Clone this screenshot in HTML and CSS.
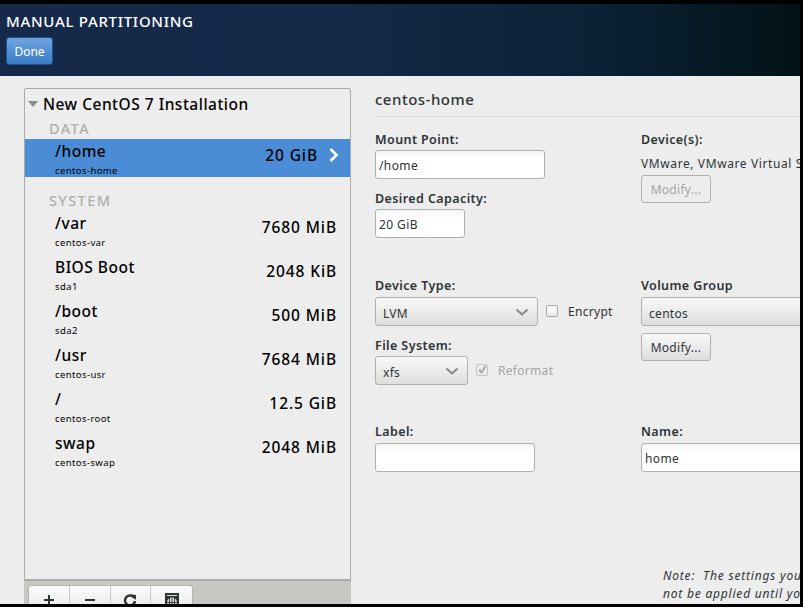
FILE: index.html
```html
<!DOCTYPE html>
<html lang="en">
<head>
    <meta charset="UTF-8">
    <title>Manual Partitioning</title>
    <link rel="stylesheet" href="styles.css">
</head>
<body>
    <div class="window">
        <header class="top-bar">
            <h1>MANUAL PARTITIONING</h1>
            <button class="done-btn">Done</button>
        </header>
        <main class="content">
            <section class="left-side">
                <div class="list-box">
                    <div class="list-title"><span class="arrow-down"></span>New CentOS 7 Installation</div>
                    <div class="group-name">DATA</div>
                    <div class="mount selected">
                        <div><div class="mount-name">/home</div><div class="mount-sub">centos-home</div></div>
                        <div class="mount-size">20 GiB</div>
                        <svg class="chevron" width="12" height="14" viewBox="0 0 12 14"><path d="M1.5 1 L7.5 7 L1.5 13" fill="none" stroke="#fff" stroke-width="2.6"/></svg>
                    </div>
                    <div class="group-name system">SYSTEM</div>
                    <div class="mount">
                        <div><div class="mount-name">/var</div><div class="mount-sub">centos-var</div></div>
                        <div class="mount-size">7680 MiB</div>
                    </div>
                    <div class="mount">
                        <div><div class="mount-name">BIOS Boot</div><div class="mount-sub">sda1</div></div>
                        <div class="mount-size">2048 KiB</div>
                    </div>
                    <div class="mount">
                        <div><div class="mount-name">/boot</div><div class="mount-sub">sda2</div></div>
                        <div class="mount-size">500 MiB</div>
                    </div>
                    <div class="mount">
                        <div><div class="mount-name">/usr</div><div class="mount-sub">centos-usr</div></div>
                        <div class="mount-size">7684 MiB</div>
                    </div>
                    <div class="mount">
                        <div><div class="mount-name">/</div><div class="mount-sub">centos-root</div></div>
                        <div class="mount-size">12.5 GiB</div>
                    </div>
                    <div class="mount">
                        <div><div class="mount-name">swap</div><div class="mount-sub">centos-swap</div></div>
                        <div class="mount-size">2048 MiB</div>
                    </div>
                </div>
                <div class="toolbar">
                    <div class="tool-group">
                        <div class="tool">
                            <svg width="12" height="12" viewBox="0 0 12 12"><path d="M6 1V11M1 6H11" stroke="#2e3436" stroke-width="2"/></svg>
                        </div>
                        <div class="tool">
                            <svg width="12" height="12" viewBox="0 0 12 12"><path d="M1 6H11" stroke="#2e3436" stroke-width="2"/></svg>
                        </div>
                        <div class="tool">
                            <svg width="14" height="14" viewBox="0 0 14 14"><path d="M11.5 4.2A5 5 0 1 0 12 7" fill="none" stroke="#2e3436" stroke-width="2.4"/><path d="M8 0.5L13 1V6Z" fill="#2e3436"/></svg>
                        </div>
                        <div class="tool calendar">
                            <svg width="14" height="16" viewBox="0 0 14 16"><path d="M0 0H14V16H0Z" fill="#2e3436"/><path d="M2 2.5H12" stroke="#ddd"/><circle cx="7" cy="9.5" r="5" fill="#ddd"/><path d="M2 9.5H12M7 4.5V14.5M4.5 5V14M9.5 5V14" stroke="#2e3436" stroke-width=".9"/></svg>
                        </div>
                    </div>
                </div>
            </section>
            <section class="details">
                <h2>centos-home</h2>
                <div class="form-block first">
                    <div class="form-col">
                        <label class="field-label">Mount Point:</label>
                        <input class="text-input wide" value="/home">
                        <label class="field-label second">Desired Capacity:</label>
                        <input class="text-input small" value="20 GiB">
                    </div>
                    <div class="form-col">
                        <label class="field-label">Device(s):</label>
                        <div class="device-text">VMware, VMware Virtual S</div>
                        <button class="modify disabled">Modify...</button>
                    </div>
                </div>
                <div class="form-block middle">
                    <div class="form-col">
                        <label class="field-label">Device Type:</label>
                        <div class="inline-row">
                            <div class="combo type-combo">LVM
                                <svg width="14" height="8" viewBox="0 0 14 8"><path d="M1.5 1.5L7 6.5L12.5 1.5" fill="none" stroke="#888" stroke-width="2"/></svg>
                            </div>
                            <span class="check-box"></span>
                            <span class="check-text">Encrypt</span>
                        </div>
                        <label class="field-label second">File System:</label>
                        <div class="inline-row">
                            <div class="combo fs-combo">xfs
                                <svg width="14" height="8" viewBox="0 0 14 8"><path d="M1.5 1.5L7 6.5L12.5 1.5" fill="none" stroke="#888" stroke-width="2"/></svg>
                            </div>
                            <span class="check-box checked">
                                <svg width="12" height="12" viewBox="0 0 12 12"><path d="M2.5 5.5L5.5 9L10.5 1" fill="none" stroke="#a5a5a5" stroke-width="2.2"/></svg>
                            </span>
                            <span class="check-text faded">Reformat</span>
                        </div>
                    </div>
                    <div class="form-col">
                        <label class="field-label">Volume Group</label>
                        <div class="combo group-combo">centos</div>
                        <button class="modify group-modify">Modify...</button>
                    </div>
                </div>
                <div class="form-block last">
                    <div class="form-col">
                        <label class="field-label">Label:</label>
                        <input class="text-input label-input" value="">
                    </div>
                    <div class="form-col">
                        <label class="field-label">Name:</label>
                        <input class="text-input name-input" value="home">
                    </div>
                </div>
                <p class="note">Note:&nbsp; The settings you<br>not be applied until you</p>
            </section>
        </main>
    </div>
</body>
</html>
```

FILE: styles.css
```css
* {
    box-sizing: border-box;
}
html, body {
    margin: 0;
    height: 607px;
    overflow: hidden;
}
body {
    background: #000;
    padding-top: 4px;
    font-family: "Noto Sans", "Open Sans", sans-serif;
    color: #2e3436;
}
.window {
    width: 800px;
    height: 600px;
    background: #ededed;
    overflow: hidden;
}
.top-bar {
    height: 72px;
    padding: 8px 0 0 6px;
    background: linear-gradient(90deg, #16294a 0%, #142a49 40%, #0a2236 75%, #021316 100%);
}
.top-bar h1 {
    margin: 0;
    font-size: 15px;
    line-height: 18px;
    font-weight: 500;
    letter-spacing: .7px;
    color: #fff;
}
.done-btn {
    display: block;
    margin-top: 7px;
    width: 47px;
    height: 28px;
    padding: 0;
    border: 1px solid #1f4f8c;
    border-radius: 3px;
    background: linear-gradient(#6fa5e0, #3b7cc4);
    color: #fff;
    font-family: inherit;
    font-size: 12px;
}
.content {
    display: flex;
    padding: 12px 0 0 24px;
}
.left-side {
    width: 327px;
    flex: none;
}
.list-box {
    height: 492px;
    border: 1px solid #aaaaa6;
    border-radius: 2px 2px 0 0;
}
.list-title {
    display: flex;
    align-items: center;
    height: 29px;
    padding-left: 3px;
    font-size: 15.5px;
    font-weight: 500;
    letter-spacing: .5px;
    color: #000;
}
.arrow-down {
    width: 0;
    height: 0;
    margin-right: 5px;
    border-left: 5px solid transparent;
    border-right: 5px solid transparent;
    border-top: 6px solid #8c8c88;
}
.group-name {
    height: 21px;
    padding-left: 24px;
    font-size: 14.5px;
    line-height: 20px;
    font-weight: 500;
    letter-spacing: 1.4px;
    color: #aeaeac;
}
.group-name.system {
    margin-top: 13px;
}
.mount {
    display: flex;
    align-items: center;
    height: 38px;
    margin-bottom: 6px;
    padding: 0 13px 0 30px;
    color: #000;
}
.mount.selected {
    margin-bottom: 0;
    padding-right: 9px;
    background: #4a8cd6;
}
.mount > div:first-child {
    flex: 1;
    padding-top: 3px;
}
.mount-name {
    padding-top: 1px;
    font-size: 15.5px;
    line-height: 18px;
    font-weight: 500;
    letter-spacing: .5px;
}
.mount-sub {
    font-size: 9.5px;
    line-height: 16px;
    padding-top: 3px;
    letter-spacing: .4px;
}
.mount-size {
    font-size: 15.5px;
    font-weight: 500;
    letter-spacing: .9px;
    padding-bottom: 6px;
}
.chevron {
    margin: 0 0 7px 11px;
    flex: none;
}
.toolbar {
    height: 30px;
    padding-left: 4px;
    padding-top: 4px;
    background: #c6c8c3;
    border-top: 1px solid #a9aba6;
}
.tool-group {
    display: flex;
    width: 165px;
    height: 40px;
    background: linear-gradient(#fafafa, #e2e2e2);
    border: 1px solid #b5b5b1;
    border-radius: 3px;
}
.tool {
    width: 41px;
    display: flex;
    justify-content: center;
    padding-top: 8px;
    border-right: 1px solid #c8c8c4;
}
.tool:last-child {
    border-right: 0;
}
.tool.calendar {
    padding-top: 7px;
}
.details {
    flex: none;
    width: 600px;
    margin-left: 24px;
}
.details h2 {
    margin: 0;
    height: 29px;
    font-size: 15px;
    line-height: 22px;
    font-weight: 500;
    letter-spacing: .5px;
    border-bottom: 1px solid #dcdcda;
}
.form-block {
    display: grid;
    grid-template-columns: 266px 1fr;
}
.form-block.first {
    height: 160px;
    padding-top: 14px;
}
.form-block.middle {
    height: 146px;
}
.field-label {
    display: block;
    font-size: 12.5px;
    line-height: 17px;
    font-weight: 600;
    letter-spacing: .4px;
    color: #2e3436;
}
.field-label.second {
    margin-top: 11px;
}
.text-input {
    display: block;
    height: 29px;
    margin-top: 2px;
    padding: 2px 4px 0 3px;
    font-family: inherit;
    font-size: 12px;
    letter-spacing: .4px;
    color: #2e3436;
    border: 1px solid #b0b0ac;
    border-radius: 3px;
    background: linear-gradient(#f4f4f4 0, #fff 8px);
    outline: none;
}
.text-input.wide {
    width: 170px;
}
.text-input.small {
    width: 90px;
}
.text-input.label-input {
    width: 160px;
    margin-top: 3px;
}
.text-input.name-input {
    width: 200px;
    margin-top: 3px;
}
.device-text {
    margin-top: 6px;
    font-size: 12px;
    line-height: 20px;
    letter-spacing: .6px;
    white-space: nowrap;
}
.modify {
    display: block;
    width: 70px;
    height: 28px;
    margin-top: 1px;
    padding: 1px 0 0;
    font-family: inherit;
    font-size: 12px;
    letter-spacing: .3px;
    color: #2e3436;
    border: 1px solid #b0b0ac;
    border-radius: 3px;
    background: linear-gradient(#f8f8f8, #dedede);
}
.modify.disabled {
    color: #a5a5a5;
    background: #ededed;
}
.modify.group-modify {
    margin-top: 7px;
}
.inline-row {
    display: flex;
    align-items: center;
    margin-top: 3px;
}
.field-label.second + .inline-row {
    margin-top: 2px;
}
.combo {
    display: flex;
    align-items: center;
    justify-content: space-between;
    height: 29px;
    padding: 3px 8px 0 7px;
    font-size: 12px;
    letter-spacing: .3px;
    border: 1px solid #b0b0ac;
    border-radius: 3px;
    background: linear-gradient(#f8f8f8, #dedede);
}
.combo svg {
    margin-top: -3px;
}
.type-combo {
    width: 163px;
}
.fs-combo {
    width: 93px;
}
.group-combo {
    width: 200px;
    margin-top: 3px;
}
.check-box {
    display: flex;
    align-items: center;
    justify-content: center;
    width: 12px;
    height: 12px;
    margin: 0 10px 1px 8px;
    border: 1px solid #a9a9a5;
    border-radius: 2px;
    background: linear-gradient(#fff, #ececec);
}
.check-box.checked {
    background: #ededed;
    border-color: #c4c4c2;
}
.check-text {
    font-size: 12px;
    letter-spacing: .3px;
    padding-bottom: 1px;
}
.check-text.faded {
    color: #a5a5a5;
}
.note {
    margin: 95px 0 0 288px;
    width: 400px;
    font-size: 12px;
    line-height: 18px;
    font-style: italic;
    letter-spacing: .8px;
    white-space: nowrap;
}
```
